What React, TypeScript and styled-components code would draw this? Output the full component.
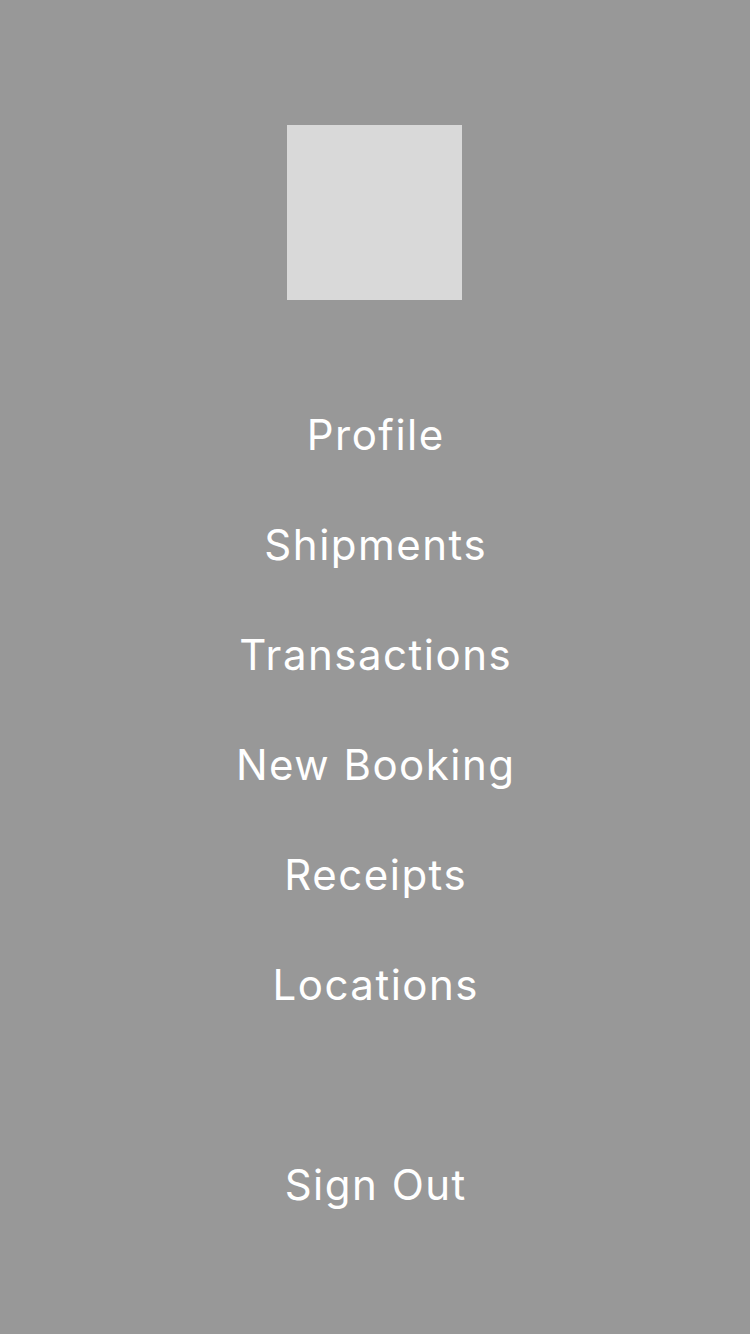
import React from "react";
import styled, { createGlobalStyle } from "styled-components";

const Global = createGlobalStyle`
  html, body { margin: 0; padding: 0; background: #989898; }
  #root { min-height: 1334px; }
`;

const Page = styled.div`
  width: 750px;
  height: 1334px;
  background: #989898;
  display: flex;
  flex-direction: column;
  align-items: center;
  padding-top: 125px;
  box-sizing: border-box;
  font-family: Inter, "Noto Sans", sans-serif;
`;

const Logo = styled.div`
  width: 175px;
  height: 175px;
  background: #d9d9d9;
  margin: 0 1px 79px 0;
`;

const Nav = styled.nav`
  display: flex;
  flex-direction: column;
  align-items: center;
`;

const Item = styled.a<{ $gapTop?: number }>`
  display: flex;
  align-items: center;
  justify-content: center;
  height: 110px;
  margin-top: ${(p) => p.$gapTop ?? 0}px;
  padding-left: 1.5px;
  color: #ffffff;
  font-size: 42px;
  font-weight: 400;
  text-decoration: none;
  letter-spacing: 1.5px;
  cursor: pointer;
`;

const items = ["Profile", "Shipments", "Transactions", "New Booking", "Receipts", "Locations"];

export default function App() {
  return (
    <>
      <Global />
      <Page>
        <Logo />
        <Nav>
          {items.map((t) => (
            <Item key={t}>{t}</Item>
          ))}
          <Item $gapTop={90}>Sign Out</Item>
        </Nav>
      </Page>
    </>
  );
}
